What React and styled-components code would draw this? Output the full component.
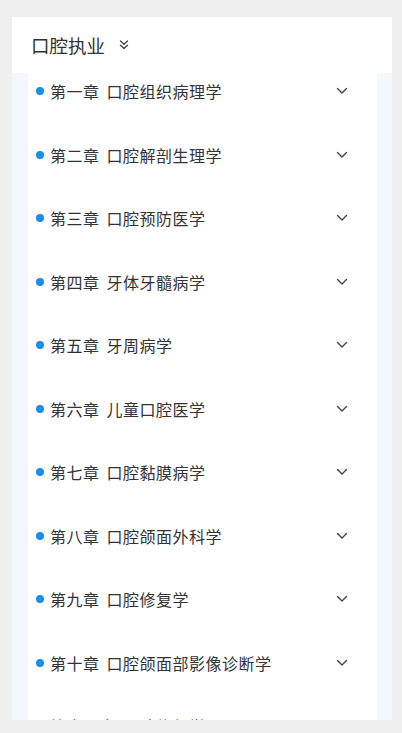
import React from 'react';
import styled, { createGlobalStyle } from 'styled-components';

const GlobalStyle = createGlobalStyle`
  html, body {
    margin: 0;
    padding: 0;
    background: #f0f0f0;
    font-family: "Noto Sans CJK SC", "Noto Sans", sans-serif;
  }
`;

const Page = styled.div`
  height: 733px;
  box-sizing: border-box;
  padding: 17px 10px 13px 12px;
  display: flex;
`;

const Card = styled.div`
  flex: 1;
  display: flex;
  flex-direction: column;
  overflow: hidden;
  background: #f4f7fd;
`;

const Header = styled.div`
  height: 56px;
  flex-shrink: 0;
  background: #fff;
  display: flex;
  align-items: center;
  padding-left: 19px;
  gap: 14px;
`;

const Title = styled.span`
  font-size: 18.5px;
  color: #333;
  line-height: 24px;
`;

const Panel = styled.div`
  flex: 1;
  margin: 0 15px 0 16px;
  background: #fff;
  overflow: hidden;
`;

const Row = styled.div`
  height: 63.5px;
  box-sizing: border-box;
  padding: 8px 29px 0 8px;
  display: flex;
  align-items: flex-start;
`;

const Dot = styled.span`
  width: 8px;
  height: 8px;
  border-radius: 50%;
  background: #1a8cf2;
  margin-top: 6px;
  margin-right: 6px;
  flex-shrink: 0;
`;

const Label = styled.span`
  flex: 1;
  font-size: 16px;
  line-height: 20px;
  letter-spacing: 0.5px;
  word-spacing: 3px;
  color: #333;
  white-space: nowrap;
`;

const Chevron = () => (
  <svg width="12" height="20" viewBox="0 0 12 20" fill="none">
    <path d="M1.5 7.5 L6 12 L10.5 7.5" stroke="#444" strokeWidth="1.4" strokeLinecap="round" strokeLinejoin="round" />
  </svg>
);

const DoubleChevron = () => (
  <svg width="10" height="12" viewBox="0 0 10 12" fill="none">
    <path d="M1.5 2 L5 5.2 L8.5 2" stroke="#444" strokeWidth="1.4" strokeLinecap="round" strokeLinejoin="round" />
    <path d="M1.5 6.2 L5 9.4 L8.5 6.2" stroke="#444" strokeWidth="1.4" strokeLinecap="round" strokeLinejoin="round" />
  </svg>
);

const chapters = [
  '第一章 口腔组织病理学',
  '第二章 口腔解剖生理学',
  '第三章 口腔预防医学',
  '第四章 牙体牙髓病学',
  '第五章 牙周病学',
  '第六章 儿童口腔医学',
  '第七章 口腔黏膜病学',
  '第八章 口腔颌面外科学',
  '第九章 口腔修复学',
  '第十章 口腔颌面部影像诊断学',
  '第十一章 口腔修复学',
];

const App = () => (
  <>
    <GlobalStyle />
    <Page>
      <Card>
        <Header>
          <Title>口腔执业</Title>
          <DoubleChevron />
        </Header>
        <Panel>
          {chapters.map((c) => (
            <Row key={c}>
              <Dot />
              <Label>{c}</Label>
              <Chevron />
            </Row>
          ))}
        </Panel>
      </Card>
    </Page>
  </>
);

export default App;
